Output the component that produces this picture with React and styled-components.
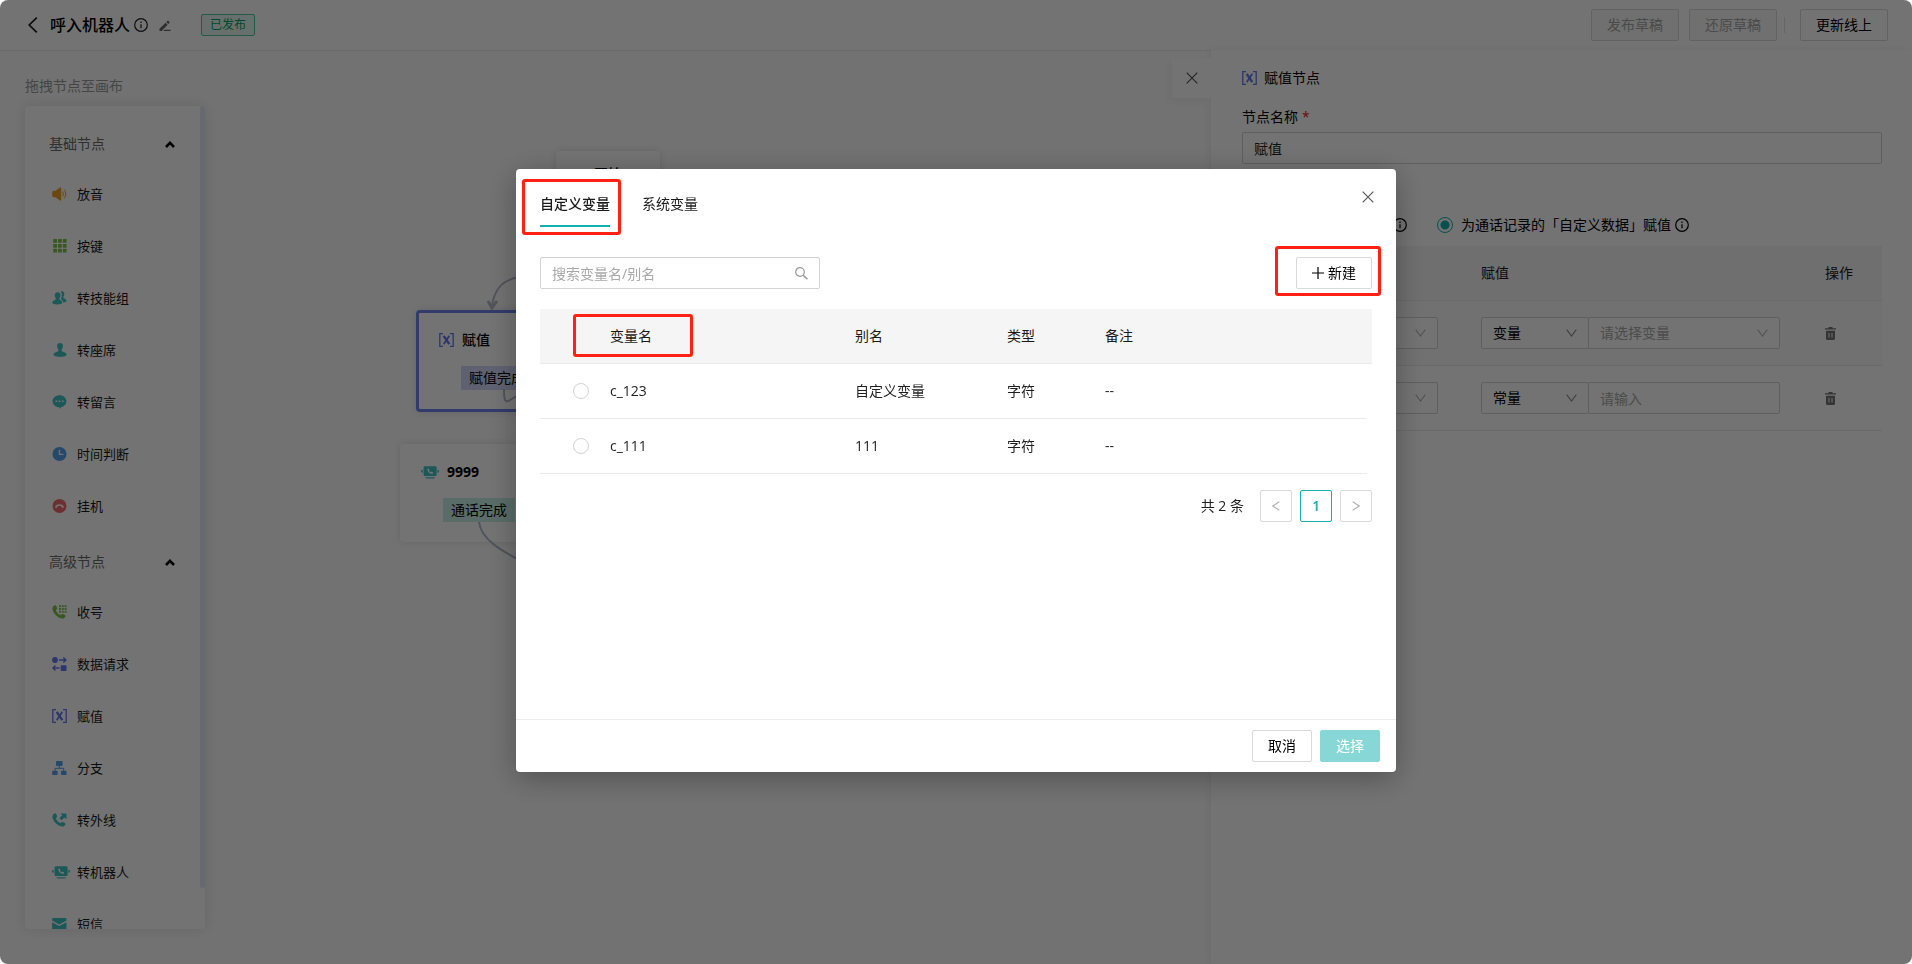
import React, { useState } from 'react';
import styled, { createGlobalStyle, css } from 'styled-components';

const GlobalStyle = createGlobalStyle`
  * {
    box-sizing: border-box;
  }

  body {
    margin: 0;
    background: #fff;
    color: #1f1f1f;
    font-family: "Open Sans", "Noto Sans CJK SC", sans-serif;
    font-size: 14px;
    line-height: 22px;
  }

  button, input, select {
    margin: 0;
    font: inherit;
    color: inherit;
  }

  h1, h2, h3, p, ul {
    margin: 0;
    padding: 0;
    font-size: inherit;
    font-weight: inherit;
  }
`;

const TEAL = '#13b0b0';
const RED = '#ff2113';

// ---------- Icons ----------

const Svg = styled.svg`
  display: block;
  flex: none;
  fill: ${props => (props.$line ? 'none' : 'currentColor')};
  stroke: ${props => (props.$line ? 'currentColor' : 'none')};
`;

const HANDSET = 'M1.2 1.6C2 .6 3 .1 3.6.4c.8.5 1.6 2.2 1.5 3.1 0 .8-1.2 1.1-1.1 1.9.3 1.7 2.6 4 4.3 4.5.8.1 1.1-1 2-1 .9 0 2.7.9 3.1 1.7.3.8-.6 1.9-1.6 2.6-1.5 1-4.8-.1-7.3-2.4C1.6 8.2.5 5.5.4 3.7.4 2.8.7 2.2 1.2 1.6Z';

const InfoIcon = () => (
  <Svg width="14" height="14" viewBox="0 0 14 14" $line strokeWidth="1.2">
    <circle cx="7" cy="7" r="6.3" />
    <path d="M7 6.2V10.3M7 3.6V4.9" />
  </Svg>
);

const CloseIcon = () => (
  <Svg width="12" height="12" viewBox="0 0 12 12" $line strokeWidth="1.2">
    <path d="M.7.7 11.3 11.3M11.3.7.7 11.3" />
  </Svg>
);

const DownIcon = () => (
  <Svg width="11" height="8" viewBox="0 0 11 8" $line strokeWidth="1.1">
    <path d="M.7.6 5.5 7 10.3.6" />
  </Svg>
);

const TrashIcon = () => (
  <Svg width="11" height="13" viewBox="0 0 11 13" fillRule="evenodd">
    <path d="M3.5 0h4v1.3H11V2.6H0V1.3h3.5ZM1 3.7h9V11.5Q10 13 8.5 13h-6Q1 13 1 11.5ZM3.5 6v4.5h1V6ZM6.5 6v4.5h1V6Z" />
  </Svg>
);

const SpeakerIcon = () => (
  <Svg width="15" height="14" viewBox="0 0 15 14">
    <path d="M.2 5.3Q.3 3.9 1.8 3.8H3.4L8 .4Q9.2-.2 9.2 1V13Q9.2 14.2 8 13.6L3.4 10.2H1.8Q.3 10.1.2 8.7Z" />
    <path d="M10.6 4.5Q12.2 7 10.6 9.5M12.2 2.5Q15.4 7 12.2 11.5" fill="none" stroke="currentColor" />
  </Svg>
);

const KeypadIcon = () => (
  <Svg width="15" height="14" viewBox="0 0 15 14">
    {[0, 4.9, 9.8].map(y => [1.2, 6, 10.8].map(x => (
      <rect key={`${x}-${y}`} x={x} y={y} width="3.8" height="3.8" rx=".6" />
    )))}
  </Svg>
);

const GroupIcon = () => (
  <Svg width="15" height="14" viewBox="0 0 15 14">
    <path d="M5.6 1.2C7.5 1.2 8.6 2.6 8.5 4.5 8.4 6 7.5 7 7.3 8c0 1 3 1.4 3 3.7 0 2.3-10 2.3-10 0C.3 9.6 3.8 9 3.9 8 3.8 7 2.8 6 2.7 4.5 2.6 2.6 3.7 1.2 5.6 1.2Z" />
    <path d="M8.6.6C10.8-.3 12.5 1 12.3 3.2 12.2 4.7 11.3 5.5 11.2 6.5c.1 1 3.5 1.5 3.3 3.6-.1 1-1.5 1.4-3.2 1.4C11.1 9.5 9.2 8.6 9 7.7 10.1 5.5 10.2 2.5 8.6.6Z" />
  </Svg>
);

const PersonIcon = () => (
  <Svg width="15" height="14" viewBox="0 0 15 14">
    <path d="M8 .1C10.1.1 11 1.5 10.9 3.2 10.8 4.8 9.6 6 9.5 7.5c0 1.6 5.1 1.5 5.1 4.1C14.6 14.7 1.5 14.7 1.5 11.6 1.5 9 6.5 9.1 6.5 7.5 6.4 6 5.2 4.8 5.1 3.2 5 1.5 5.9.1 8 .1Z" />
  </Svg>
);

const MessageIcon = () => (
  <Svg width="15" height="14" viewBox="0 0 14 14" fillRule="evenodd">
    <path d="M7 .2C10.9.2 13.9 2.9 13.9 6.3c0 3-2.3 5.3-5.3 5.9L7.3 13.9 6.9 12.3C3 12.3.1 9.7.1 6.3.1 2.9 3.1.2 7 .2ZM3 5.4v1.7h1.7V5.4ZM6.2 5.4v1.7h1.7V5.4ZM9.4 5.4v1.7h1.7V5.4Z" />
  </Svg>
);

const ClockIcon = () => (
  <Svg width="15" height="14" viewBox="0 0 14 14" fillRule="evenodd">
    <path d="M7 0a7 7 0 1 1 0 14A7 7 0 0 1 7 0ZM6.3 2.8V8H11V6.8H7.6V2.8Z" />
  </Svg>
);

const HangupIcon = () => (
  <Svg width="15" height="14" viewBox="0 0 14 14" fillRule="evenodd">
    <path d="M7 0a7 7 0 1 1 0 14A7 7 0 0 1 7 0ZM2.6 8.2C2.7 9.2 4.7 8.9 4.9 8.2V7.2Q7 6.4 9.1 7.2V8.2C9.3 8.9 11.3 9.2 11.4 8.2 11.5 4.1 2.5 4.1 2.6 8.2Z" />
  </Svg>
);

const DialIcon = () => (
  <Svg width="15" height="14" viewBox="0 0 15 14">
    <path d={HANDSET} />
    {[0.2, 3, 5.8].map(y => [7, 9.8, 12.6].map(x => (
      <rect key={`${x}-${y}`} x={x} y={y} width="1.9" height="1.9" />
    )))}
  </Svg>
);

const DataIcon = () => (
  <Svg width="15" height="14" viewBox="0 0 15 14">
    <circle cx="3" cy="3" r="2.9" />
    <rect x="8.7" y="8.2" width="5.8" height="5.7" rx=".7" />
    <path d="M7 3H14M11.3.6 13.9 3 11.3 5.4M7.5 11H1M3.4 8.6.9 11 3.4 13.4" fill="none" stroke="currentColor" strokeWidth="1.4" />
  </Svg>
);

const AssignIcon = () => (
  <Svg width="15" height="14" viewBox="0 0 15 14" $line>
    <path d="M4 .7H.8V13.3H4M11 .7H14.2V13.3H11" strokeWidth="1.3" />
    <path d="M4.7 2.8 10.3 11.2" strokeWidth="2.4" />
    <path d="M10.3 2.8 4.7 11.2" strokeWidth="1.7" />
  </Svg>
);

const BranchIcon = () => (
  <Svg width="15" height="14" viewBox="0 0 15 14">
    <rect x="4" y="0" width="6.6" height="4.9" rx=".8" />
    <rect x=".2" y="9.8" width="5.4" height="4.2" rx=".8" />
    <rect x="9" y="9.8" width="5.5" height="4.2" rx=".8" />
    <path d="M7.3 4.5V7.3M3 10V7.3H11.7V10" fill="none" stroke="currentColor" />
  </Svg>
);

const CallOutIcon = () => (
  <Svg width="15" height="14" viewBox="0 0 15 14">
    <path d={HANDSET} />
    <path d="M8.3.5H14.5V6.3L12.5 4.5 9.6 7.3 7.3 5.2 10.3 2.3Z" />
  </Svg>
);

const RobotIcon = () => (
  <Svg width="18" height="14" viewBox="0 0 18 14" fillRule="evenodd">
    <path d="M3.9 1.3H14.3Q15.6 1.3 15.6 2.6V9.8Q15.6 11.1 14.3 11.1H3.9Q2.6 11.1 2.6 9.8V2.6Q2.6 1.3 3.9 1.3ZM6.4 3.7C6.3 7 8.6 8.9 11.8 8.7L12.1 7.3 10.3 6.6 9.5 7.4 7.9 5.8 8.5 5 7.7 3.4Z" />
    <path d="M1.7 4.7V7.9L0 7V5.6ZM16.4 4.7V7.9L18 7V5.6ZM4.2 12.3H14.1L13 13.5H5.3Z" />
  </Svg>
);

const MailIcon = () => (
  <Svg width="15" height="14" viewBox="0 0 15 14">
    <path d="M1.3 1H13.3Q14.5 1 14.5 2.2V3.6L7.3 7.5.1 3.6V2.2Q.1 1 1.3 1ZM.1 5.2 7.3 9 14.5 5.2V12Q14.5 13 13.5 13H1.1Q.1 13 .1 12Z" />
  </Svg>
);

// ---------- Shared controls ----------

const Button = styled.button`
  display: inline-flex;
  align-items: center;
  justify-content: center;
  gap: 4px;
  height: 32px;
  padding: 0 15px;
  border: 1px solid #d9d9d9;
  border-radius: 2px;
  background: #fff;
  color: #000;
  white-space: nowrap;

  &:disabled {
    background: #f8f8f8;
    color: #a6a6a6;
  }

  ${props => props.$primary && css`
    &:disabled {
      border-color: #87d7d7;
      background: #87d7d7;
      color: #fff;
    }
  `}
`;

const IconButton = styled.button`
  display: flex;
  align-items: center;
  justify-content: center;
  padding: 0;
  border: 0;
  background: none;
  color: ${props => props.$color || '#555'};
`;

const Radio = styled.input.attrs({ type: 'radio' })`
  appearance: none;
  flex: none;
  display: block;
  width: 16px;
  height: 16px;
  border: 1px solid #d3d3d3;
  border-radius: 50%;
  background: #fff;

  &:checked {
    border-color: ${TEAL};
    background: radial-gradient(circle, ${TEAL} 4px, #fff 5px);
  }
`;

const TextInput = styled.input`
  width: 100%;
  height: 32px;
  padding: 0 11px;
  border: 1px solid #d3d3d3;
  border-radius: 2px;
  background: #fff;
  outline: none;

  &::placeholder {
    color: #a8a8a8;
    opacity: 1;
  }
`;

const SelectBox = styled.span`
  position: relative;
  display: block;
  flex: ${props => (props.$width ? `0 0 ${props.$width}px` : '1')};
  width: ${props => (props.$width ? `${props.$width}px` : 'auto')};
  color: ${props => (props.$muted ? '#a8a8a8' : '#000')};

  select {
    appearance: none;
    width: 100%;
    height: 32px;
    padding: 0 11px;
    border: 1px solid #d3d3d3;
    border-radius: 2px;
    background: #fff;
    outline: none;
  }

  svg {
    position: absolute;
    top: 12px;
    right: 12px;
    color: ${props => (props.$muted ? '#b8b8b8' : '#8c8c8c')};
    pointer-events: none;
  }
`;

const Select = ({ label, value, width, muted }) => (
  <SelectBox $width={width} $muted={muted}>
    <select aria-label={label} defaultValue={value}>
      <option value={value}>{value}</option>
    </select>
    <DownIcon />
  </SelectBox>
);

// ---------- Page ----------

const Page = styled.div`
  display: flex;
  flex-direction: column;
  height: 100vh;
  overflow: hidden;
`;

const Header = styled.header`
  display: flex;
  flex: none;
  align-items: center;
  height: 50px;
  padding: 0 24px 0 28px;
`;

const BackButton = styled(IconButton)`
  width: 22px;
  justify-content: flex-start;
`;

const Title = styled.h1`
  margin-right: 4px;
  color: #000;
  font-size: 16px;
  font-weight: 500;
`;

const EditButton = styled(IconButton)`
  margin: 2px 30px 0 11px;
`;

const StatusTag = styled.span`
  height: 22px;
  padding: 0 8px;
  border: 1px solid #52c99a;
  border-radius: 2px;
  background: #e4f8ef;
  color: #00a366;
  font-size: 12px;
  line-height: 20px;
`;

const HeaderActions = styled.div`
  display: flex;
  align-items: center;
  gap: 10px;
  margin-left: auto;
`;

const Divider = styled.span`
  width: 1px;
  height: 16px;
  margin: 0 5px 0 -3px;
  background: #e3e3e3;
`;

const Workspace = styled.main`
  display: flex;
  flex: 1;
  min-height: 0;
`;

const Editor = styled.div`
  display: flex;
  flex: 1;
  min-width: 0;
  border-top: 1px solid #ebebeb;
  background: #fdfdfd;
`;

const Sidebar = styled.aside`
  display: flex;
  flex-direction: column;
  flex: 0 0 230px;
  padding: 24px 25px 35px;
`;

const SidebarHint = styled.p`
  margin-bottom: 9px;
  color: #999;
`;

const Palette = styled.div`
  display: flex;
  flex: 1;
  min-height: 0;
  overflow: hidden;
  border-radius: 4px;
  background: #fff;
  box-shadow: 0 0 14px rgba(0, 0, 0, 0.12);
`;

const PaletteGroups = styled.div`
  flex: 1;
  padding-top: 14px;
`;

const ScrollThumb = styled.span`
  width: 5px;
  height: 95%;
  border-radius: 3px;
  background: #e3e9f1;
`;

const Group = styled.section`
  margin-bottom: 6px;

  ul {
    list-style: none;
  }
`;

const GroupTitle = styled.h2`
  display: flex;
  align-items: center;
  justify-content: space-between;
  height: 48px;
  padding: 0 25px 0 24px;
  color: #6c6c6c;

  svg {
    color: #000;
  }
`;

const PaletteItem = styled.li`
  display: flex;
  align-items: center;
  height: 52px;
  padding-left: 27px;
  color: #1a1a1a;
  font-size: 13px;
`;

const TypeIcon = styled.span`
  width: ${props => (props.$slot ? '25px' : 'auto')};
  color: ${props => props.$color};
`;

const Canvas = styled.div`
  position: relative;
  flex: 1;
  min-width: 0;
  overflow: hidden;
`;

const Edges = styled.svg`
  position: absolute;
  top: 0;
  left: 0;
  width: 100%;
  height: 100%;
  fill: none;
  stroke: #b4b8c8;
  stroke-width: 2;
`;

const Node = styled.div`
  position: absolute;
  top: ${props => props.$top}px;
  left: ${props => props.$left}px;
  min-width: ${props => props.$width}px;
  padding: ${props => (props.$small ? '11px 20px' : '16px 20px 19px')};
  border: ${props => (props.$selected ? '3px solid #6f83ee' : '1px solid transparent')};
  border-radius: 4px;
  background: #fff;
  box-shadow: 0 0 8px rgba(0, 0, 0, 0.12);
`;

const NodeTitle = styled.h3`
  display: flex;
  align-items: center;
  justify-content: ${props => (props.$center ? 'center' : 'flex-start')};
  gap: 8px;
  color: #000;
  font-weight: ${props => (props.$bold ? 700 : 500)};
`;

const NodePort = styled.p`
  width: 72px;
  height: 24px;
  margin: 15px 0 0 22px;
  padding: 0 8px;
  background: ${props => props.$color};
  color: #000;
  line-height: 24px;
`;

const Panel = styled.aside`
  position: relative;
  flex: 0 0 701px;
  padding: 17px 30px 0 31px;
  background: #fff;
  box-shadow: -2px 0 8px rgba(0, 0, 0, 0.06);
`;

// Sits outside the left edge of the panel
const PanelClose = styled(IconButton)`
  position: absolute;
  top: 8px;
  left: -39px;
  width: 39px;
  height: 40px;
  background: #fff;
  box-shadow: -3px 4px 8px rgba(0, 0, 0, 0.05);
`;

const PanelTitle = styled.h2`
  display: flex;
  align-items: center;
  gap: 7px;
  color: #000;
`;

const FieldLabel = styled.label`
  display: block;
  margin: 17px 0 4px;
  color: #000;

  span {
    margin-left: 4px;
    color: #e02020;
  }
`;

const RadioRow = styled.div`
  display: flex;
  gap: 30px;
  margin: 50px 0 10px;
`;

const RadioOption = styled.label`
  display: flex;
  align-items: center;
  justify-content: space-between;
  gap: ${props => (props.$wide ? 0 : 4)}px;
  min-width: ${props => (props.$wide ? 165 : 0)}px;
  height: 22px;
  color: #000;

  input {
    margin-right: 4px;
  }
`;

const Table = styled.table`
  width: 100%;
  table-layout: fixed;
  border-collapse: separate;
  border-spacing: 0;

  th, td {
    height: ${props => props.$rowHeight}px;
    padding: 0 16px;
    border-bottom: 1px solid #ebebeb;
    text-align: left;
    font-weight: 400;
  }

  th {
    position: relative;
    height: 55px;
    background: #f5f5f5;
    color: #1a1a1a;
  }
`;

const PanelRow = styled.tr`
  background: ${props => (props.$hover ? '#fafafa' : '#fff')};
`;

const ValueGroup = styled.div`
  display: flex;
  width: 299px;

  > * + * {
    flex: 1;
    margin-left: -1px;
  }
`;

// ---------- Modal ----------

const Mask = styled.div`
  position: fixed;
  inset: 0;
  display: flex;
  align-items: flex-start;
  justify-content: center;
  border-radius: 8px;
  background: rgba(0, 0, 0, 0.55);
`;

const Dialog = styled.section`
  position: relative;
  width: 880px;
  max-width: 100%;
  margin-top: 169px;
  border-radius: 4px;
  background: #fff;
  box-shadow: 0 6px 30px rgba(0, 0, 0, 0.3);
`;

const DialogClose = styled(IconButton)`
  position: absolute;
  top: 16px;
  right: 16px;
  width: 24px;
  height: 24px;
`;

const DialogBody = styled.div`
  min-height: 550px;
  padding: 24px 24px 0;
`;

const TabList = styled.div`
  display: flex;
  gap: 32px;
`;

const Tab = styled.button`
  position: relative;
  height: 34px;
  padding: 0 0 10px;
  border: 0;
  border-bottom: 2px solid ${props => (props.$active ? TEAL : 'transparent')};
  background: none;
  color: #1a1a1a;
  font-weight: ${props => (props.$active ? 500 : 400)};
`;

// Red frame that points the reader to a part of the dialog
const Highlight = styled.span`
  position: absolute;
  inset: ${props => props.$inset};
  border: 3px solid ${RED};
  border-radius: 3px;
  pointer-events: none;
`;

const Toolbar = styled.div`
  display: flex;
  justify-content: space-between;
  margin: 30px 0 20px;
`;

const SearchBox = styled.label`
  position: relative;
  width: 280px;

  svg {
    position: absolute;
    top: 10px;
    right: 12px;
    color: #999;
  }
`;

const NewButtonWrap = styled.div`
  position: relative;
`;

const RadioCell = styled.td`
  && {
    padding: 0 0 0 33px;
  }
`;

const GutterCell = styled.td`
  && {
    padding: 0;
    border: 0;
  }
`;

const Pagination = styled.nav`
  display: flex;
  align-items: center;
  justify-content: flex-end;
  gap: 8px;
  margin-top: 16px;

  p {
    margin-right: 8px;
  }
`;

const PageButton = styled.button`
  display: flex;
  align-items: center;
  justify-content: center;
  width: 32px;
  height: 32px;
  padding: 0;
  border: 1px solid ${props => (props.$active ? TEAL : '#d9d9d9')};
  border-radius: 2px;
  background: #fff;
  color: ${props => (props.$active ? TEAL : '#b0b0b0')};
  font-weight: ${props => (props.$active ? 600 : 400)};
`;

const DialogFooter = styled.footer`
  display: flex;
  justify-content: flex-end;
  gap: 8px;
  padding: 10px 16px;
  border-top: 1px solid #ededed;
`;

const GROUPS = [
  {
    title: '基础节点',
    items: [
      { name: '放音', icon: SpeakerIcon, color: '#eea02c' },
      { name: '按键', icon: KeypadIcon, color: '#7cc04a' },
      { name: '转技能组', icon: GroupIcon, color: '#3cc4c0' },
      { name: '转座席', icon: PersonIcon, color: '#3cc4c0' },
      { name: '转留言', icon: MessageIcon, color: '#3cc4c0' },
      { name: '时间判断', icon: ClockIcon, color: '#529fee' },
      { name: '挂机', icon: HangupIcon, color: '#f06a70' },
    ],
  },
  {
    title: '高级节点',
    items: [
      { name: '收号', icon: DialIcon, color: '#7cc04a' },
      { name: '数据请求', icon: DataIcon, color: '#6478f0' },
      { name: '赋值', icon: AssignIcon, color: '#6478f0' },
      { name: '分支', icon: BranchIcon, color: '#529fee' },
      { name: '转外线', icon: CallOutIcon, color: '#3cc4c0' },
      { name: '转机器人', icon: RobotIcon, color: '#3cc4c0' },
      { name: '短信', icon: MailIcon, color: '#3cc4c0' },
    ],
  },
];

const VARIABLES = [
  { name: 'c_123', alias: '自定义变量', type: '字符', remark: '--' },
  { name: 'c_111', alias: '111', type: '字符', remark: '--' },
];

const PageHeader = () => (
  <Header>
    <BackButton aria-label="返回" $color="#1a1a1a">
      <Svg width="10" height="16" viewBox="0 0 10 16" $line strokeWidth="1.7">
        <path d="M8.8.6 1.2 8 8.8 15.4" />
      </Svg>
    </BackButton>
    <Title>呼入机器人</Title>
    <InfoIcon />
    <EditButton aria-label="编辑" $color="#666">
      <Svg width="12" height="12" viewBox="0 0 12 12">
        <path d="M.5 11V8.8L6.6 2.7 8.6 4.7 2.6 11ZM7.3 2 8.3 1Q9 .5 9.6 1L10.3 1.7Q10.8 2.3 10.3 3L9.3 4ZM5.5 9.8H11.5V11H4.3Z" />
      </Svg>
    </EditButton>
    <StatusTag>已发布</StatusTag>
    <HeaderActions>
      <Button disabled>发布草稿</Button>
      <Button disabled>还原草稿</Button>
      <Divider />
      <Button>更新线上</Button>
    </HeaderActions>
  </Header>
);

const NodePalette = () => (
  <Sidebar>
    <SidebarHint>拖拽节点至画布</SidebarHint>
    <Palette>
      <PaletteGroups>
        {GROUPS.map(group => (
          <Group key={group.title}>
            <GroupTitle>
              {group.title}
              <Svg width="10" height="7" viewBox="0 0 10 7" $line strokeWidth="2.6">
                <path d="M1 6 5 1.9 9 6" />
              </Svg>
            </GroupTitle>
            <ul>
              {group.items.map(({ name, icon: Icon, color }) => (
                <PaletteItem key={name}>
                  <TypeIcon $slot $color={color}><Icon /></TypeIcon>
                  {name}
                </PaletteItem>
              ))}
            </ul>
          </Group>
        ))}
      </PaletteGroups>
      <ScrollThumb />
    </Palette>
  </Sidebar>
);

const FlowCanvas = () => (
  <Canvas>
    <Node $top={100} $left={326} $width={104} $small>
      <NodeTitle $center>开始</NodeTitle>
    </Node>
    <Node $top={259} $left={186} $width={240} $selected>
      <NodeTitle>
        <TypeIcon $color="#6478f0"><AssignIcon /></TypeIcon>
        赋值
      </NodeTitle>
      <NodePort $color="#d3d8fa">赋值完成</NodePort>
    </Node>
    <Node $top={393} $left={170} $width={240}>
      <NodeTitle $bold>
        <TypeIcon $color="#3cc4c0"><RobotIcon /></TypeIcon>
        9999
      </NodeTitle>
      <NodePort $color="#c8f0e6">通话完成</NodePort>
    </Node>
    <Edges>
      <path d="M330 226H290C274 228 263 238 262 258" />
      <path d="M258 250 262 257 267 250" strokeWidth="3" />
      <path d="M274 338C274 350 275 352 280 349L292 342" />
      <path d="M249 471C251 488 270 500 300 514" />
    </Edges>
  </Canvas>
);

const NodePanel = () => (
  <Panel>
    <PanelClose aria-label="关闭面板"><CloseIcon /></PanelClose>
    <PanelTitle>
      <TypeIcon $color="#6478f0"><AssignIcon /></TypeIcon>
      赋值节点
    </PanelTitle>
    <FieldLabel htmlFor="node-name">节点名称<span>*</span></FieldLabel>
    <TextInput id="node-name" defaultValue="赋值" />
    <RadioRow>
      <RadioOption $wide>
        <Radio name="target" aria-label="变量" />
        <InfoIcon />
      </RadioOption>
      <RadioOption>
        <Radio name="target" defaultChecked />
        为通话记录的「自定义数据」赋值
        <InfoIcon />
      </RadioOption>
    </RadioRow>
    <Table $rowHeight={65}>
      <colgroup>
        <col width="223" />
        <col />
        <col width="73" />
      </colgroup>
      <thead>
        <tr>
          <th />
          <th>赋值</th>
          <th>操作</th>
        </tr>
      </thead>
      <tbody>
        <PanelRow $hover>
          <td><Select label="字段" value="" width={180} muted /></td>
          <td>
            <ValueGroup>
              <Select label="赋值类型" value="变量" width={108} />
              <Select label="变量" value="请选择变量" muted />
            </ValueGroup>
          </td>
          <td><IconButton aria-label="删除" $color="#777"><TrashIcon /></IconButton></td>
        </PanelRow>
        <PanelRow>
          <td><Select label="字段" value="" width={180} muted /></td>
          <td>
            <ValueGroup>
              <Select label="赋值类型" value="常量" width={108} />
              <TextInput aria-label="常量" placeholder="请输入" />
            </ValueGroup>
          </td>
          <td><IconButton aria-label="删除" $color="#777"><TrashIcon /></IconButton></td>
        </PanelRow>
      </tbody>
    </Table>
  </Panel>
);

const VariableDialog = () => {
  const [tab, setTab] = useState('custom');
  const [picked, setPicked] = useState(null);

  return (
    <Mask>
      <Dialog role="dialog" aria-modal="true" aria-label="选择变量">
        <DialogBody>
          <TabList role="tablist">
            <Tab role="tab" aria-selected={tab === 'custom'} $active={tab === 'custom'} onClick={() => setTab('custom')}>
              自定义变量
              <Highlight $inset="-14px -11px -10px -18px" />
            </Tab>
            <Tab role="tab" aria-selected={tab === 'system'} $active={tab === 'system'} onClick={() => setTab('system')}>
              系统变量
            </Tab>
          </TabList>
          <Toolbar>
            <SearchBox>
              <TextInput placeholder="搜索变量名/别名" aria-label="搜索变量名/别名" />
              <Svg width="13" height="13" viewBox="0 0 13 13" $line strokeWidth="1.2">
                <circle cx="5" cy="5" r="4.3" />
                <path d="M8.2 8.2 12.5 12.3" strokeWidth="1.5" />
              </Svg>
            </SearchBox>
            <NewButtonWrap>
              <Button>
                <Svg width="12" height="12" viewBox="0 0 12 12" $line strokeWidth="1.2">
                  <path d="M6 0V12M0 6H12" />
                </Svg>
                新建
              </Button>
              <Highlight $inset="-11px -9px -7px -21px" />
            </NewButtonWrap>
          </Toolbar>
          <Table $rowHeight={55}>
            <colgroup>
              <col width="54" />
              <col width="245" />
              <col width="152" />
              <col width="98" />
              <col />
              <col width="5" />
            </colgroup>
            <thead>
              <tr>
                <th />
                <th>
                  变量名
                  <Highlight $inset="5px 146px 6px -21px" />
                </th>
                <th>别名</th>
                <th>类型</th>
                <th colSpan={2}>备注</th>
              </tr>
            </thead>
            <tbody>
              {VARIABLES.map(item => (
                <tr key={item.name}>
                  <RadioCell>
                    <Radio
                      name="variable"
                      aria-label={item.name}
                      checked={picked === item.name}
                      onChange={() => setPicked(item.name)}
                    />
                  </RadioCell>
                  <td>{item.name}</td>
                  <td>{item.alias}</td>
                  <td>{item.type}</td>
                  <td>{item.remark}</td>
                  <GutterCell />
                </tr>
              ))}
            </tbody>
          </Table>
          <Pagination aria-label="分页">
            <p>共 2 条</p>
            <PageButton aria-label="上一页">
              <Svg width="8" height="10" viewBox="0 0 8 10" $line strokeWidth="1.1">
                <path d="M7.3.7.8 5 7.3 9.3" />
              </Svg>
            </PageButton>
            <PageButton $active>1</PageButton>
            <PageButton aria-label="下一页">
              <Svg width="8" height="10" viewBox="0 0 8 10" $line strokeWidth="1.1">
                <path d="M.7.7 7.2 5 .7 9.3" />
              </Svg>
            </PageButton>
          </Pagination>
        </DialogBody>
        <DialogFooter>
          <Button>取消</Button>
          <Button $primary disabled={!picked}>选择</Button>
        </DialogFooter>
        <DialogClose aria-label="关闭"><CloseIcon /></DialogClose>
      </Dialog>
    </Mask>
  );
};

const App = () => (
  <>
    <GlobalStyle />
    <Page>
      <PageHeader />
      <Workspace>
        <Editor>
          <NodePalette />
          <FlowCanvas />
        </Editor>
        <NodePanel />
      </Workspace>
    </Page>
    <VariableDialog />
  </>
);

export default App;
